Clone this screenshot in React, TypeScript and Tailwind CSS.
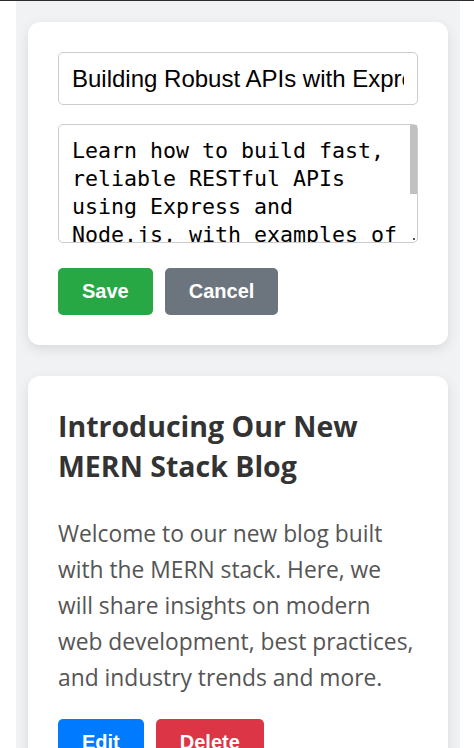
import React from "react";

const sans = { fontFamily: '"Liberation Sans", Arial, sans-serif' };

const App = () => {
  return (
    <div className="min-h-screen bg-white">
      <div className="h-px bg-[#2d2d2d]" />
      <div className="ml-4 w-[444px] bg-[#f1f2f4] px-3 pt-[21px] pb-8">
        {/* edit form card */}
        <div className="mb-[31px] rounded-xl bg-white p-[30px] shadow-[0_4px_12px_rgba(0,0,0,0.1)]">
          <input
            type="text"
            defaultValue="Building Robust APIs with Express.js"
            className="block h-[53px] w-full rounded-[5px] border border-[#cccccc] px-[13px] text-[24px] text-black outline-none"
            style={sans}
          />
          <div className="relative mt-[19px]">
            <textarea
              defaultValue="Learn how to build fast, reliable RESTful APIs using Express and Node.js, with examples of routing, middleware, and error handling."
              className="block h-[119px] w-full resize-none overflow-hidden rounded-[5px] border border-[#cccccc] pt-[12px] pr-[14px] pl-[13px] text-[21.6px] leading-[28px] text-black outline-none"
              style={{ fontFamily: '"DejaVu Sans Mono", monospace' }}
            />
            {/* scrollbar thumb */}
            <div className="absolute top-px right-px h-[69px] w-[7px] bg-[#c1c1c1]" />
            <div className="absolute right-[3px] bottom-[3px] h-[2px] w-[2px] bg-[#555]" />
          </div>
          <div className="mt-[25px] flex gap-3" style={sans}>
            <button className="rounded-[5px] bg-[#28a745] px-6 py-3 text-[20px] leading-[23px] font-bold text-white">
              Save
            </button>
            <button className="rounded-[5px] bg-[#6c757d] px-6 py-3 text-[20px] leading-[23px] font-bold text-white">
              Cancel
            </button>
          </div>
        </div>

        {/* post card */}
        <div className="rounded-xl bg-white p-[30px] shadow-[0_4px_12px_rgba(0,0,0,0.1)]">
          <h2
            className="text-[28.5px] leading-[40px] font-bold text-[#333333]"
            style={{ fontFamily: '"Open Sans", sans-serif' }}
          >
            Introducing Our New MERN Stack Blog
          </h2>
          <p
            className="mt-[30px] text-[22.8px] leading-[36px] text-[#555555]"
            style={{ fontFamily: '"Open Sans", sans-serif' }}
          >
            Welcome to our new blog built with the MERN stack. Here, we will share insights on modern web development, best
            practices, and industry trends and more.
          </p>
          <div className="mt-[23px] flex gap-3" style={sans}>
            <button className="rounded-[5px] bg-[#007bff] px-6 py-3 text-[20px] leading-[23px] font-bold text-white">
              Edit
            </button>
            <button className="rounded-[5px] bg-[#dc3545] px-6 py-3 text-[20px] leading-[23px] font-bold text-white">
              Delete
            </button>
          </div>
        </div>
      </div>
    </div>
  );
};

export default App;
